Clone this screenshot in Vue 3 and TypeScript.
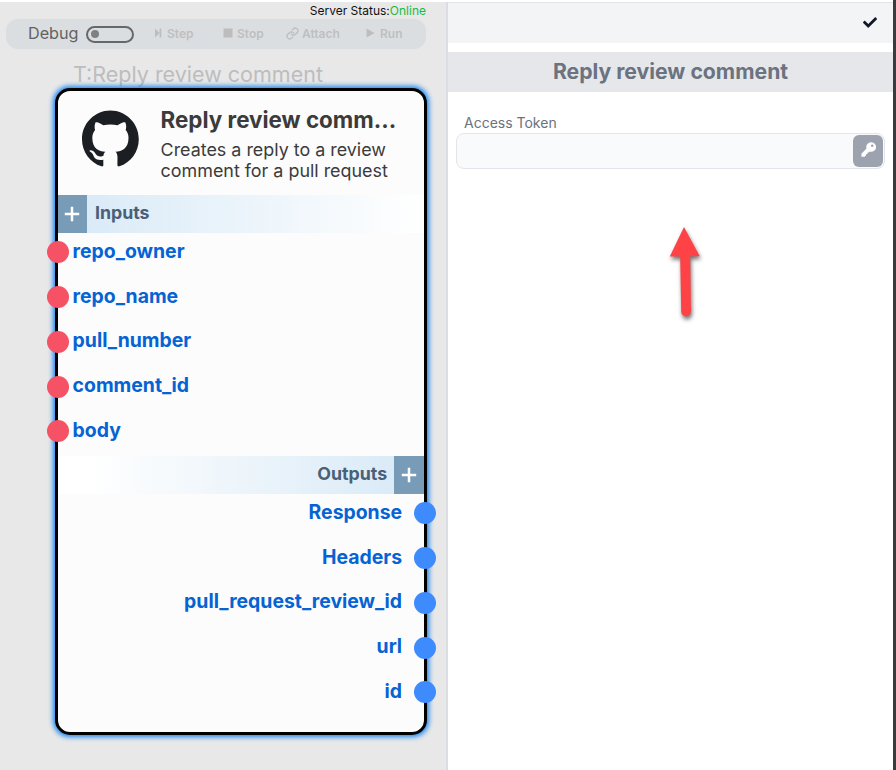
<script setup lang="ts">
interface Action {
  name: string
  icon: string
}

const actions: Action[] = [
  { name: 'Step', icon: 'step' },
  { name: 'Stop', icon: 'stop' },
  { name: 'Attach', icon: 'attach' },
  { name: 'Run', icon: 'run' },
]
const inputs: string[] = ['repo_owner', 'repo_name', 'pull_number', 'comment_id', 'body']
const outputs: string[] = ['Response', 'Headers', 'pull_request_review_id', 'url', 'id']
</script>

<template>
  <div class="app">
    <section class="canvas">
      <div class="status">Server Status:<span class="online">Online</span></div>
      <div class="toolbar">
        <span class="debug">Debug</span>
        <span class="toggle"><i class="knob"></i></span>
        <span v-for="a in actions" :key="a.name" class="action" :class="a.icon">
          <svg v-if="a.icon === 'step'" class="ico" viewBox="0 0 7 10"><path d="M0 0.5L4.6 5L0 9.5zM4.6 0.5h1.7v9H4.6z" /></svg>
          <svg v-else-if="a.icon === 'stop'" class="ico" viewBox="0 0 10 10"><path d="M0.5 0.5h9v9h-9z" /></svg>
          <svg v-else-if="a.icon === 'attach'" class="ico line" viewBox="0 0 24 24"><path d="M10 13a5 5 0 0 0 7.54.54l3-3a5 5 0 0 0-7.07-7.07l-1.72 1.71M14 11a5 5 0 0 0-7.54-.54l-3 3a5 5 0 0 0 7.07 7.07l1.71-1.71" /></svg>
          <svg v-else class="ico" viewBox="0 0 9 10"><path d="M0.5 0.5L8.5 5L0.5 9.5z" /></svg>
          <span>{{ a.name }}</span>
        </span>
      </div>
      <div class="node-label">T:Reply review comment</div>
      <article class="node">
        <header class="head">
          <svg class="github" viewBox="0 0 98 96"><path d="M48.854 0C21.839 0 0 22 0 49.217c0 21.756 13.993 40.172 33.405 46.69 2.427.49 3.316-1.059 3.316-2.362 0-1.141-.08-5.052-.08-9.127-13.59 2.934-16.42-5.867-16.42-5.867-2.184-5.704-5.42-7.17-5.42-7.17-4.448-3.015.324-3.015.324-3.015 4.934.326 7.523 5.052 7.523 5.052 4.367 7.496 11.404 5.378 14.235 4.074.404-3.178 1.699-5.378 3.074-6.6-10.839-1.141-22.243-5.378-22.243-24.283 0-5.378 1.94-9.778 5.014-13.2-.485-1.222-2.184-6.275.486-13.038 0 0 4.125-1.304 13.426 5.052a46.97 46.97 0 0 1 12.214-1.63c4.125 0 8.33.571 12.213 1.63 9.302-6.356 13.427-5.052 13.427-5.052 2.67 6.763.97 11.816.485 13.038 3.155 3.422 5.015 7.822 5.015 13.2 0 18.905-11.404 23.06-22.324 24.283 1.78 1.548 3.316 4.481 3.316 9.126 0 6.6-.08 11.897-.08 13.526 0 1.304.89 2.853 3.316 2.364 19.412-6.52 33.405-24.935 33.405-46.691C97.707 22 75.788 0 48.854 0z" /></svg>
          <div class="heading">
            <h2>Reply review comm...</h2>
            <p>Creates a reply to a review<br />comment for a pull request</p>
          </div>
        </header>
        <div class="band in">
          <span class="plus"><svg viewBox="0 0 16 16"><path d="M8 0.8v14.4M0.8 8h14.4" /></svg></span>
          <span class="band-title">Inputs</span>
        </div>
        <ul class="ports">
          <li v-for="p in inputs" :key="p"><i class="dot red"></i><span>{{ p }}</span></li>
        </ul>
        <div class="band out">
          <span class="band-title">Outputs</span>
          <span class="plus"><svg viewBox="0 0 16 16"><path d="M8 0.8v14.4M0.8 8h14.4" /></svg></span>
        </div>
        <ul class="ports right">
          <li v-for="p in outputs" :key="p"><span>{{ p }}</span><i class="dot blue"></i></li>
        </ul>
      </article>
    </section>

    <aside class="panel">
      <div class="panel-bar">
        <svg class="check" viewBox="0 64 512 384"><path d="M173.898 439.404l-166.4-166.4c-9.997-9.997-9.997-26.206 0-36.204l36.203-36.204c9.997-9.998 26.207-9.998 36.204 0L192 312.69 432.095 72.596c9.997-9.997 26.207-9.997 36.204 0l36.203 36.204c9.997 9.997 9.997 26.206 0 36.204l-294.4 294.401c-9.998 9.997-26.207 9.997-36.204-.001z" /></svg>
      </div>
      <h1>Reply review comment</h1>
      <label class="field-label">Access Token</label>
      <div class="field">
        <span class="key"><svg viewBox="0 0 15 15"><path fill-rule="evenodd" d="M10 0.2a4.8 4.8 0 1 1-1.1 9.4L7.7 10.6H6.5V12H5.1V13.2L3.6 14.7H0.4V11.8L5.5 6.4A4.8 4.8 0 0 1 10 0.2zM11.2 2.5a1.25 1.25 0 1 0 0 2.5a1.25 1.25 0 0 0 0-2.5z" /></svg></span>
      </div>
      <svg class="arrow" viewBox="0 0 50 110"><path d="M24 7L39.8 36.2H30.2L31 91.5a4.9 4.9 0 0 1-9.8 0L20.2 36.4H9.8z" /></svg>
    </aside>
  </div>
</template>

<style>
body {
  background: #fff;
  overflow: hidden;
}
</style>

<style scoped>
* {
  box-sizing: border-box;
}
.app {
  display: flex;
  width: 896px;
  height: 770px;
  padding-top: 2px;
  border-right: 3px solid #3b3b3d;
  font-family: Inter, 'Liberation Sans', sans-serif;
}
h1,
h2,
p,
ul {
  margin: 0;
  padding: 0;
}
.canvas {
  width: 448px;
  flex: none;
  background: #e8e8e8;
  border-right: 2px solid #dadde2;
}
.status {
  height: 17px;
  padding-right: 20px;
  text-align: right;
  font-size: 12px;
  line-height: 17px;
  color: #111;
}
.online {
  color: #19bb3f;
}
.toolbar {
  display: flex;
  align-items: center;
  width: 420px;
  height: 30px;
  margin-left: 6px;
  padding-left: 22px;
  border-radius: 12px;
  background: #dadee1;
}
.debug {
  width: 58px;
  margin-top: -2px;
  font-size: 16.2px;
  color: #626262;
}
.toggle {
  display: flex;
  align-items: center;
  width: 48px;
  height: 17px;
  padding-left: 3px;
  border: 2px solid #686868;
  border-radius: 9px;
}
.knob {
  width: 8px;
  height: 8px;
  border-radius: 50%;
  background: #808080;
}
.action {
  display: flex;
  align-items: center;
  gap: 5px;
  margin-top: -1px;
  font-size: 12px;
  font-weight: 600;
  color: #bfbfbf;
}
.ico {
  height: 10px;
  fill: #bdbdbd;
  margin-top: -1px;
}
.ico.line {
  height: 13px;
  margin-right: -1px;
  fill: none;
  stroke: #bdbdbd;
  stroke-width: 2.4;
  stroke-linecap: round;
}
.step {
  margin-left: 21px;
  width: 68px;
}
.stop {
  width: 63px;
  gap: 4px;
}
.attach {
  width: 80px;
  gap: 4px;
}
.node-label {
  height: 38.5px;
  padding: 11px 0 0 73px;
  font-size: 21.5px;
  line-height: 28px;
  color: #bdbdbd;
  white-space: nowrap;
}
.node {
  position: relative;
  width: 372.5px;
  height: 647px;
  margin-left: 54.6px;
  border: 3px solid #000;
  border-radius: 15px;
  background: #fcfcfc;
  box-shadow: 0 0 5px 1.5px #1a86f0;
}
.head {
  display: flex;
  height: 104.5px;
  padding: 19px 0 0 24px;
}
.github {
  width: 57px;
  height: 57px;
  fill: #1b1f23;
}
.heading {
  margin-left: 22px;
  color: #3b3b3b;
  white-space: nowrap;
}
h2 {
  margin-top: -5px;
  font-size: 22.4px;
  line-height: 30px;
  font-weight: 700;
}
p {
  margin-top: 4px;
  font-size: 17.9px;
  line-height: 21px;
}
.band {
  display: flex;
  align-items: center;
  height: 37.5px;
}
.in {
  background: linear-gradient(90deg, #d7e9f6, #fff);
}
.out {
  justify-content: flex-end;
  background: linear-gradient(270deg, #d7e9f6, #fff 92%);
}
.plus {
  display: flex;
  align-items: center;
  justify-content: center;
  width: 30px;
  height: 100%;
  padding-top: 1px;
  background: #789bb7;
}
.in .plus {
  width: 29.5px;
}
.plus svg {
  width: 16px;
  height: 16px;
  fill: none;
  stroke: #fff;
  stroke-width: 2.5;
}
.band-title {
  margin: -2px 7px 0 7.8px;
  font-size: 17.8px;
  font-weight: 700;
  color: #4a6078;
}
.ports {
  list-style: none;
  height: 223.7px;
}
.ports li {
  position: relative;
  display: flex;
  align-items: center;
  height: 44.75px;
  padding: 0 0 8.2px 15px;
  font-size: 19.4px;
  font-weight: 700;
  color: #0563d3;
}
.ports.right li {
  justify-content: flex-end;
  padding-right: 22px;
}
.dot {
  position: absolute;
  top: 8.8px;
  width: 22px;
  height: 22px;
  border-radius: 50%;
}
.red {
  left: -10.6px;
  background: #f55266;
}
.blue {
  right: -12px;
  background: #3d8bfd;
}
.panel {
  flex: 1;
}
.panel-bar {
  display: flex;
  justify-content: flex-end;
  height: 41px;
  padding: 14px 16px 0 0;
  border-top: 1px solid #e1e4e8;
  background: #f3f4f6;
}
.check {
  width: 14px;
  height: 11px;
  fill: #111827;
}
h1 {
  height: 40px;
  margin-top: 9px;
  background: #e5e7eb;
  font-size: 21.2px;
  line-height: 39px;
  font-weight: 700;
  text-align: center;
  color: #6b7280;
}
.field-label {
  display: block;
  height: 41px;
  padding: 21px 0 0 16px;
  font-size: 14px;
  line-height: 19px;
  color: #6b7280;
}
.field {
  display: flex;
  justify-content: flex-end;
  width: 429px;
  height: 36px;
  margin-left: 8px;
  padding: 1px;
  border: 1px solid #e2e5e9;
  border-radius: 8px;
  background: #f9fafb;
}
.key {
  display: flex;
  justify-content: center;
  width: 30px;
  height: 32px;
  padding-top: 7px;
  border-radius: 6px;
  background: #9ca3af;
}
.key svg {
  width: 15px;
  height: 15px;
  fill: #fff;
}
.arrow {
  display: block;
  width: 50px;
  height: 110px;
  margin: 50.5px 0 0 212px;
  fill: #fe4245;
  filter: drop-shadow(1px 3px 2px rgba(0, 0, 0, 0.55));
}
</style>
